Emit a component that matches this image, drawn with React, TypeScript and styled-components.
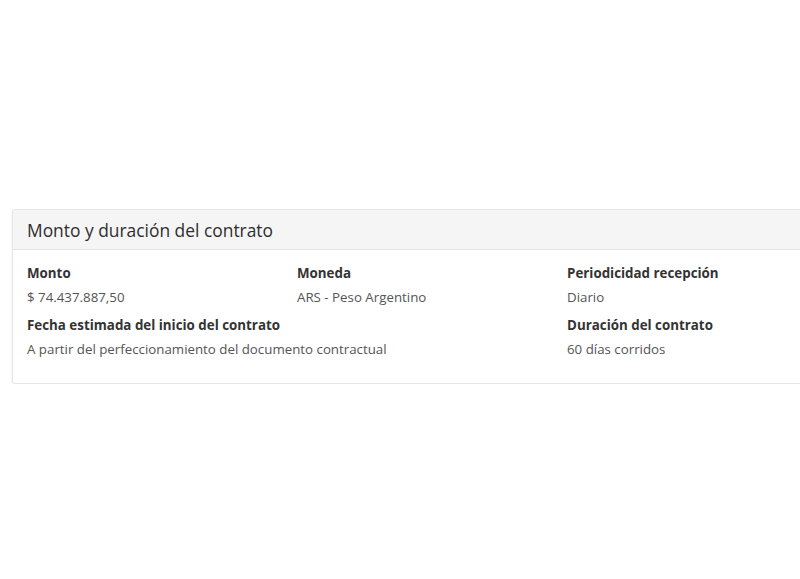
import React from "react"
import styled, { createGlobalStyle } from "styled-components"

const GlobalStyle = createGlobalStyle`
  body {
    margin: 0;
    background: #fff;
    overflow: hidden;
    font-family: "Open Sans", "Liberation Sans", sans-serif;
  }
`

type Field = { label: string; value: string; span?: number }

const rows: Field[][] = [
  [
    { label: "Monto", value: "$ 74.437.887,50" },
    { label: "Moneda", value: "ARS - Peso Argentino" },
    { label: "Periodicidad recepción", value: "Diario" },
  ],
  [
    {
      label: "Fecha estimada del inicio del contrato",
      value: "A partir del perfeccionamiento del documento contractual",
      span: 2,
    },
    { label: "Duración del contrato", value: "60 días corridos" },
  ],
]

function App(): JSX.Element {
  return (
    <Page>
      <GlobalStyle />
      <Card>
        <CardHeader>Monto y duración del contrato</CardHeader>
        <CardBody>
          {rows.map((row, i) => (
            <Row key={i}>
              {row.map((f) => (
                <Cell key={f.label} $span={f.span ?? 1}>
                  <Label>{f.label}</Label>
                  <Value>{f.value}</Value>
                </Cell>
              ))}
            </Row>
          ))}
        </CardBody>
      </Card>
    </Page>
  )
}

const Page = styled.div`
  padding: 209px 0 0 12px;
  width: 1000px;
`

const Card = styled.section`
  width: 820px;
  background: #fff;
  border: 1px solid #e6e6e6;
  border-radius: 3px;
  box-shadow: 0 1px 3px rgba(0, 0, 0, 0.08);
`

const CardHeader = styled.h3`
  margin: 0;
  height: 39px;
  display: flex;
  align-items: center;
  padding: 0 14px;
  background: #f5f5f5;
  border-bottom: 1px solid #e3e3e3;
  font-size: 17.4px;
  font-weight: 400;
  color: #2e2e2e;
`

const CardBody = styled.div`
  padding: 14px 14px 25px;
`

const Row = styled.div`
  display: grid;
  grid-template-columns: repeat(3, 270px);
  & + & {
    margin-top: 10px;
  }
`

const Cell = styled.div<{ $span: number }>`
  grid-column: span ${(p) => p.$span};
`

const Label = styled.div`
  font-size: 13.35px;
  font-weight: 700;
  color: #333;
  line-height: 18px;
`

const Value = styled.div`
  margin-top: 6px;
  font-size: 13.3px;
  color: #555;
  line-height: 18px;
`

export default App
